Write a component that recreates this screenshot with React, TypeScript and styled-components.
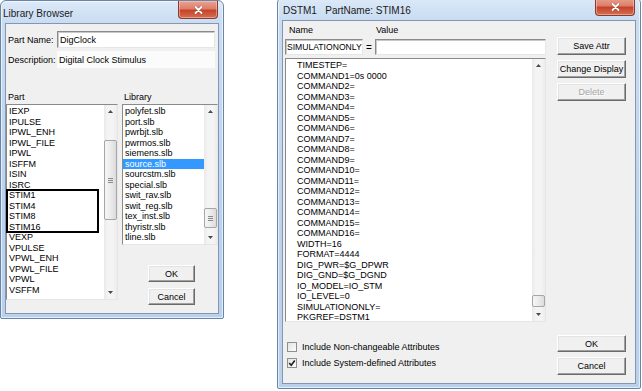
import styled, { createGlobalStyle } from "styled-components"

const GlobalStyle = createGlobalStyle`
  html, body {
    margin: 0;
    padding: 0;
    background: #ffffff;
  }
  body {
    font-family: "Liberation Sans", Arial, sans-serif;
    font-size: 9px;
    color: #000;
  }
  * {
    box-sizing: border-box;
  }
`

const partHead = ["IEXP", "IPULSE", "IPWL_ENH", "IPWL_FILE", "IPWL", "ISFFM", "ISIN", "ISRC"]
const stimParts = ["STIM1", "STIM4", "STIM8", "STIM16"]
const partTail = ["VEXP", "VPULSE", "VPWL_ENH", "VPWL_FILE", "VPWL", "VSFFM"]

const libraries = [
    "polyfet.slb", "port.slb", "pwrbjt.slb", "pwrmos.slb", "siemens.slb", "source.slb",
    "sourcstm.slb", "special.slb", "swit_rav.slb", "swit_reg.slb", "tex_inst.slb",
    "thyristr.slb", "tline.slb",
]

const commands = Array.from({ length: 16 }, (_, i) => (i === 0 ? "COMMAND1=0s 0000" : `COMMAND${i + 1}=`))

const attributes = [
    "TIMESTEP=",
    ...commands,
    "WIDTH=16",
    "FORMAT=4444",
    "DIG_PWR=$G_DPWR",
    "DIG_GND=$G_DGND",
    "IO_MODEL=IO_STM",
    "IO_LEVEL=0",
    "SIMULATIONONLY=",
    "PKGREF=DSTM1",
]

const ArrowIcon = ({ down }: { down?: boolean }) => (
    <svg width="5" height="3" viewBox="0 0 5 3">
        <polygon points={down ? "0,0 5,0 2.5,3" : "0,3 5,3 2.5,0"} fill="#4a4a4a" />
    </svg>
)

const GripIcon = () => (
    <svg width="5" height="5" viewBox="0 0 5 5">
        <path d="M0 0.5H5M0 2.5H5M0 4.5H5" stroke="#8a8a8a" strokeWidth="1" />
    </svg>
)

const CloseIcon = () => (
    <svg width="9" height="8" viewBox="0 0 9 8">
        <path d="M1.5 1L7.5 7M7.5 1L1.5 7" stroke="#5a1a12" strokeWidth="3" strokeLinecap="round" opacity="0.35" />
        <path d="M1.5 1L7.5 7M7.5 1L1.5 7" stroke="#ffffff" strokeWidth="1.8" strokeLinecap="round" />
    </svg>
)

const CheckIcon = () => (
    <svg width="8" height="8" viewBox="0 0 8 8">
        <path d="M1.2 4L3.2 6.2L6.8 1.5" stroke="#1f1f1f" strokeWidth="1.6" fill="none" />
    </svg>
)

type ScrollProps = { thumbTop: number; thumbHeight: number; grip?: boolean }

const ScrollBar = ({ thumbTop, thumbHeight, grip }: ScrollProps) => (
    <Scroll>
        <ScrollArrow><ArrowIcon /></ScrollArrow>
        <ScrollTrack>
            <ScrollThumb style={{ marginTop: thumbTop, height: thumbHeight }}>
                {grip && <GripIcon />}
            </ScrollThumb>
        </ScrollTrack>
        <ScrollArrow><ArrowIcon down /></ScrollArrow>
    </Scroll>
)

const LibraryBrowser = () => (
    <Window $width={224} $height={319} $left={0} $top={0}>
        <TitleBar>
            <Title $indent={-2}>Library Browser</Title>
            <CloseButton><CloseIcon /></CloseButton>
        </TitleBar>
        <Client>
            <BrowserBody>
                <FieldRow>
                    <FieldLabel>Part Name:</FieldLabel>
                    <TextBox $width={158}>DigClock</TextBox>
                </FieldRow>
                <FieldRow>
                    <FieldLabel>Description:</FieldLabel>
                    <DescBox>Digital Clock Stimulus</DescBox>
                </FieldRow>
                <ColumnsRow>
                    <Column $width={112}>
                        <ColumnLabel>Part</ColumnLabel>
                        <ListBox $height={196}>
                            <ListItems>
                                {partHead.map(p => <ListItem key={p} $indent={2}>{p}</ListItem>)}
                                <ItemGroup>
                                    {stimParts.map(p => <ListItem key={p} $indent={2}>{p}</ListItem>)}
                                </ItemGroup>
                                {partTail.map(p => <ListItem key={p} $indent={2}>{p}</ListItem>)}
                            </ListItems>
                            <ScrollBar thumbTop={22} thumbHeight={80} grip />
                        </ListBox>
                    </Column>
                    <Column $width={96}>
                        <ColumnLabel>Library</ColumnLabel>
                        <ListBox $height={141}>
                            <ListItems>
                                {libraries.map(l => (
                                    <ListItem key={l} $indent={2} $selected={l === "source.slb"}>{l}</ListItem>
                                ))}
                            </ListItems>
                            <ScrollBar thumbTop={90} thumbHeight={20} grip />
                        </ListBox>
                        <BrowserButtons>
                            <PushButton $width={47} $height={17}>OK</PushButton>
                            <PushButton $width={47} $height={17}>Cancel</PushButton>
                        </BrowserButtons>
                    </Column>
                </ColumnsRow>
            </BrowserBody>
        </Client>
    </Window>
)

const AttributeEditor = () => (
    <Window $width={364} $height={392} $left={53} $top={-3}>
        <TitleBar>
            <Title $indent={1}>DSTM1&nbsp;&nbsp;&nbsp;PartName: STIM16</Title>
            <CloseButton><CloseIcon /></CloseButton>
        </TitleBar>
        <Client>
            <EditorBody>
                <EditorMain>
                    <HeaderRow>
                        <HeaderLabel $width={91}>Name</HeaderLabel>
                        <HeaderLabel>Value</HeaderLabel>
                    </HeaderRow>
                    <InputRow>
                        <NameBox>SIMULATIONONLY</NameBox>
                        <Equals>=</Equals>
                        <TextBox $width={171} />
                    </InputRow>
                    <AttrList>
                        <ListBox $height={264}>
                            <ListItems>
                                {attributes.map(a => <ListItem key={a} $indent={11}>{a}</ListItem>)}
                            </ListItems>
                            <ScrollBar thumbTop={223} thumbHeight={12} />
                        </ListBox>
                    </AttrList>
                    <Options>
                        <CheckRow>
                            <CheckBox />
                            <span>Include Non-changeable Attributes</span>
                        </CheckRow>
                        <CheckRow>
                            <CheckBox><CheckIcon /></CheckBox>
                            <span>Include System-defined Attributes</span>
                        </CheckRow>
                    </Options>
                </EditorMain>
                <EditorButtons>
                    <ButtonStack>
                        <PushButton $width={69} $height={18}>Save Attr</PushButton>
                        <PushButton $width={69} $height={18}>Change Display</PushButton>
                        <PushButton $width={69} $height={18} disabled>Delete</PushButton>
                    </ButtonStack>
                    <ButtonStack>
                        <PushButton $width={69} $height={17}>OK</PushButton>
                        <PushButton $width={69} $height={18}>Cancel</PushButton>
                    </ButtonStack>
                </EditorButtons>
            </EditorBody>
        </Client>
    </Window>
)

const App = () => (
    <>
        <GlobalStyle />
        <Desktop>
            <LibraryBrowser />
            <AttributeEditor />
        </Desktop>
    </>
)

const Desktop = styled.div`
  width: 642px;
  height: 391px;
  overflow: hidden;
  display: flex;
  align-items: flex-start;
`;

const Window = styled.div<{ $width: number; $height: number; $left: number; $top: number }>`
  flex: none;
  width: ${p => p.$width}px;
  height: ${p => p.$height}px;
  margin-left: ${p => p.$left}px;
  margin-top: ${p => p.$top}px;
  display: flex;
  flex-direction: column;
  padding: 0 4px 4px;
  border: 1px solid #6a84a5;
  border-radius: 6px 6px 2px 2px;
  background: linear-gradient(180deg, #dce9f8 0px, #c9dcf2 22px, #bcd3ee 60%, #b9d1ed 100%);
  box-shadow: inset 0 0 0 1px rgba(255, 255, 255, 0.6);
`;

const TitleBar = styled.div`
  height: 22px;
  display: flex;
  align-items: center;
  justify-content: space-between;
`;

const Title = styled.span<{ $indent: number }>`
  margin-left: ${p => p.$indent}px;
  margin-top: 2px;
  font-size: 10px;
  color: #1b1b1b;
`;

const CloseButton = styled.div`
  align-self: flex-start;
  width: 40px;
  height: 18px;
  margin-right: 1px;
  display: flex;
  align-items: center;
  justify-content: center;
  border: 1px solid #8a3a2e;
  border-top: none;
  border-radius: 0 0 4px 4px;
  background: linear-gradient(180deg, #eaa392 0%, #dc7e68 45%, #c7432c 55%, #d2704f 100%);
  box-shadow: inset 0 0 0 1px rgba(255, 220, 210, 0.45);
`;

const Client = styled.div`
  flex: 1;
  background: #f0f0f0;
  border: 1px solid #8497b0;
`;

const BrowserBody = styled.div`
  padding-top: 7px;
`;

const FieldRow = styled.div`
  display: flex;
  align-items: center;
  height: 17px;
  & + & {
    margin-top: 3px;
  }
`;

const FieldLabel = styled.span`
  width: 51px;
  padding-left: 2px;
  white-space: nowrap;
`;

const TextBox = styled.div<{ $width: number }>`
  width: ${p => p.$width}px;
  height: 100%;
  display: flex;
  align-items: center;
  padding-left: 2px;
  background: #ffffff;
  border: 1px solid;
  border-color: #8a8a8a #e6e6e6 #e6e6e6 #8a8a8a;
  box-shadow: inset 1px 1px 0 #c8c8c8;
  white-space: nowrap;
  overflow: hidden;
`;

const NameBox = styled(TextBox).attrs({ $width: 78 })`
  padding-left: 1px;
  font-size: 8.6px;
`;

const DescBox = styled.div`
  width: 158px;
  height: 100%;
  display: flex;
  align-items: center;
  padding-left: 2px;
  background: #fbfbfb;
`;

const ColumnsRow = styled.div`
  display: flex;
  gap: 4px;
  margin-top: 23px;
`;

const Column = styled.div<{ $width: number }>`
  width: ${p => p.$width}px;
  display: flex;
  flex-direction: column;
`;

const ColumnLabel = styled.div`
  height: 13px;
  line-height: 13px;
  padding-left: 2px;
`;

const ListBox = styled.div<{ $height: number }>`
  height: ${p => p.$height}px;
  display: flex;
  background: #ffffff;
  border: 1px solid;
  border-color: #8a8a8a #e6e6e6 #e6e6e6 #8a8a8a;
`;

const ListItems = styled.div`
  flex: 1;
  padding-top: 1px;
  min-width: 0;
`;

const ListItem = styled.div<{ $indent: number; $selected?: boolean }>`
  height: 10.5px;
  line-height: 10.5px;
  padding-left: ${p => p.$indent}px;
  white-space: nowrap;
  background: ${p => (p.$selected ? "#3399ff" : "transparent")};
  color: ${p => (p.$selected ? "#ffffff" : "#000000")};
`;

const ItemGroup = styled.div`
  width: 91px;
  outline: 2px solid #000000;
  outline-offset: -1px;
`;

const Scroll = styled.div`
  width: 13px;
  display: flex;
  flex-direction: column;
  background: linear-gradient(90deg, #e9e9e9, #f4f4f4 30%, #f4f4f4 70%, #ececec);
`;

const ScrollArrow = styled.div`
  height: 13px;
  display: flex;
  align-items: center;
  justify-content: center;
`;

const ScrollTrack = styled.div`
  flex: 1;
  display: flex;
  flex-direction: column;
`;

const ScrollThumb = styled.div`
  display: flex;
  align-items: center;
  justify-content: center;
  border: 1px solid #a6a6a6;
  border-radius: 2px;
  background: linear-gradient(90deg, #f6f6f6, #ebebeb 50%, #dcdcdc);
`;

const BrowserButtons = styled.div`
  display: flex;
  flex-direction: column;
  gap: 6px;
  margin: 20px 0 0 26px;
`;

const PushButton = styled.button<{ $width: number; $height: number }>`
  width: ${p => p.$width}px;
  height: ${p => p.$height}px;
  padding: 0;
  font-family: "Liberation Sans", Arial, sans-serif;
  font-size: 9px;
  white-space: nowrap;
  color: #000000;
  background: #f0f0f0;
  border: 1px solid;
  border-color: #ffffff #6a6a6a #6a6a6a #ffffff;
  box-shadow: inset -1px -1px 0 #a0a0a0, inset 1px 1px 0 #e3e3e3;
  &:disabled {
    color: #a3a3a3;
    text-shadow: 1px 1px 0 #ffffff;
  }
`;

const EditorBody = styled.div`
  height: 100%;
  display: grid;
  grid-template-columns: 263px 69px;
  column-gap: 9px;
  padding-left: 2px;
`;

const EditorMain = styled.div`
  display: flex;
  flex-direction: column;
`;

const HeaderRow = styled.div`
  display: flex;
  height: 15px;
  padding-top: 3px;
  line-height: 12px;
`;

const HeaderLabel = styled.span<{ $width?: number }>`
  width: ${p => (p.$width ? `${p.$width}px` : "auto")};
  padding-left: ${p => (p.$width ? "4px" : "0")};
`;

const InputRow = styled.div`
  display: flex;
  align-items: center;
  height: 16px;
  margin-top: 3px;
`;

const Equals = styled.span`
  width: 12px;
  text-align: center;
  font-size: 10px;
`;

const AttrList = styled.div`
  width: 261px;
  margin-top: 3px;
`;

const Options = styled.div`
  display: flex;
  flex-direction: column;
  gap: 2px;
  margin-top: 18px;
`;

const CheckRow = styled.div`
  display: flex;
  align-items: center;
  gap: 5px;
  height: 14px;
  padding-left: 2px;
`;

const CheckBox = styled.span`
  width: 10px;
  height: 10px;
  display: flex;
  align-items: center;
  justify-content: center;
  border: 1px solid #8e8f8f;
  background: linear-gradient(135deg, #e4e4e4, #fbfbfb);
`;

const EditorButtons = styled.div`
  display: flex;
  flex-direction: column;
  justify-content: space-between;
  padding: 16px 0 8px;
`;

const ButtonStack = styled.div`
  display: flex;
  flex-direction: column;
  gap: 5px;
`;

export default App
